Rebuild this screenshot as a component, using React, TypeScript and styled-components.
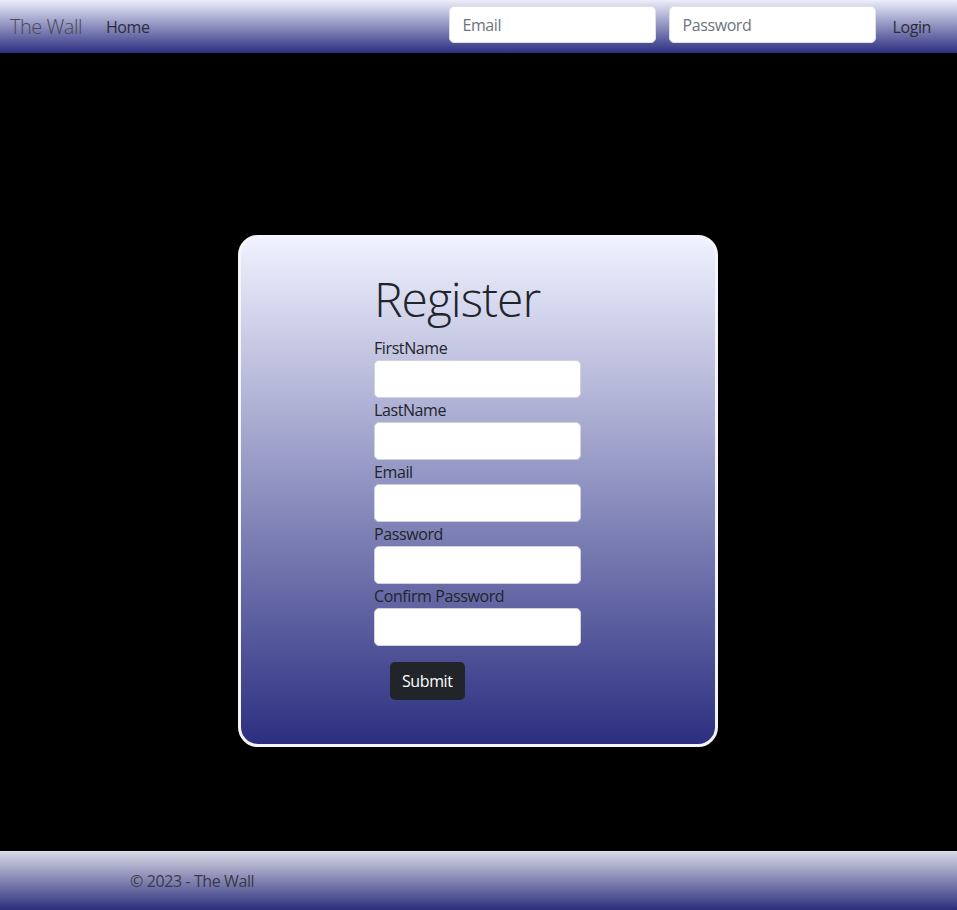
import React from "react";
import styled, { createGlobalStyle } from "styled-components";

const Global = createGlobalStyle`
  html, body { margin: 0; padding: 0; background: #000; }
  body { font-family: "Open Sans", "Noto Sans", sans-serif; font-size: 16px; color: #212529; letter-spacing: -0.4px; }
  * { box-sizing: border-box; }
`;

const Page = styled.div`
  min-height: 910px;
  display: flex;
  flex-direction: column;
  background: #000;
`;

const NavBar = styled.nav`
  height: 53px;
  display: flex;
  align-items: center;
  padding: 0 18px 0 10px;
  background: linear-gradient(to bottom, #eceefa, #2c2f80);
`;

const Brand = styled.a`
  font-size: 20px;
  font-weight: 300;
  letter-spacing: -0.5px;
  color: #4a4a55;
  text-decoration: none;
  margin-right: 16px;
`;

const NavLink = styled.a`
  font-size: 16px;
  color: #2c2c3a;
  text-decoration: none;
  padding: 8px;
`;

const Spacer = styled.div`
  flex: 1;
`;

const NavForm = styled.form`
  display: flex;
  gap: 13px;
  align-self: flex-start;
  margin-top: 6px;
  margin-right: 8px;
`;

const NavInput = styled.input`
  width: 207px;
  height: 37px;
  border: 1px solid #dee2e6;
  border-radius: 5px;
  padding: 6px 12px;
  font-family: inherit;
  letter-spacing: inherit;
  font-size: 16px;
  background: #fff;
  &::placeholder { color: #6c757d; }
`;

const Main = styled.main`
  flex: 1;
  display: flex;
  justify-content: center;
  align-items: flex-start;
  padding: 182px 2px 0 0;
`;

const Card = styled.div`
  width: 480px;
  height: 512px;
  border: 3px solid #f4f4fb;
  border-radius: 20px;
  background: linear-gradient(to bottom, #f0f2ff, #2c2f80);
  padding: 32px 0 0;
  display: flex;
  justify-content: center;
`;

const FormCol = styled.form`
  width: 207px;
  display: flex;
  flex-direction: column;
`;

const Title = styled.h1`
  margin: 0 0 8px;
  font-size: 48px;
  font-weight: 300;
  line-height: 1.2;
  letter-spacing: -1px;
  color: #212529;
  white-space: nowrap;
`;

const Label = styled.label`
  display: block;
  font-size: 16px;
  line-height: 24px;
  color: #212529;
`;

const Field = styled.input`
  display: block;
  width: 207px;
  height: 38px;
  border: 1px solid #ced4da;
  border-radius: 5px;
  padding: 6px 12px;
  font-family: inherit;
  font-size: 16px;
  background: #fff;
`;

const SubmitButton = styled.button`
  align-self: flex-start;
  margin: 16px 0 0 16px;
  height: 38px;
  padding: 0 12px;
  background: #212529;
  color: #fff;
  border: none;
  border-radius: 5px;
  font-family: inherit;
  letter-spacing: inherit;
  font-size: 16px;
`;

const Footer = styled.footer`
  height: 59px;
  display: flex;
  align-items: center;
  padding-left: 130px;
  border-top: 1px solid #dfe0ea;
  background: linear-gradient(to bottom, #d6d7e4, #2c2e7c);
  color: #3a3a48;
  font-size: 16px;
`;

const fields = ["FirstName", "LastName", "Email", "Password", "Confirm Password"];

export default function App() {
  return (
    <Page>
      <Global />
      <NavBar>
        <Brand href="#">The Wall</Brand>
        <NavLink href="#">Home</NavLink>
        <Spacer />
        <NavForm onSubmit={(e) => e.preventDefault()}>
          <NavInput placeholder="Email" />
          <NavInput placeholder="Password" type="password" />
        </NavForm>
        <NavLink href="#">Login</NavLink>
      </NavBar>
      <Main>
        <Card>
          <FormCol onSubmit={(e) => e.preventDefault()}>
            <Title>Register</Title>
            {fields.map((f) => (
              <div key={f}>
                <Label>{f}</Label>
                <Field type={f.includes("Password") ? "password" : "text"} />
              </div>
            ))}
            <SubmitButton type="submit">Submit</SubmitButton>
          </FormCol>
        </Card>
      </Main>
      <Footer>© 2023 - The Wall</Footer>
    </Page>
  );
}
